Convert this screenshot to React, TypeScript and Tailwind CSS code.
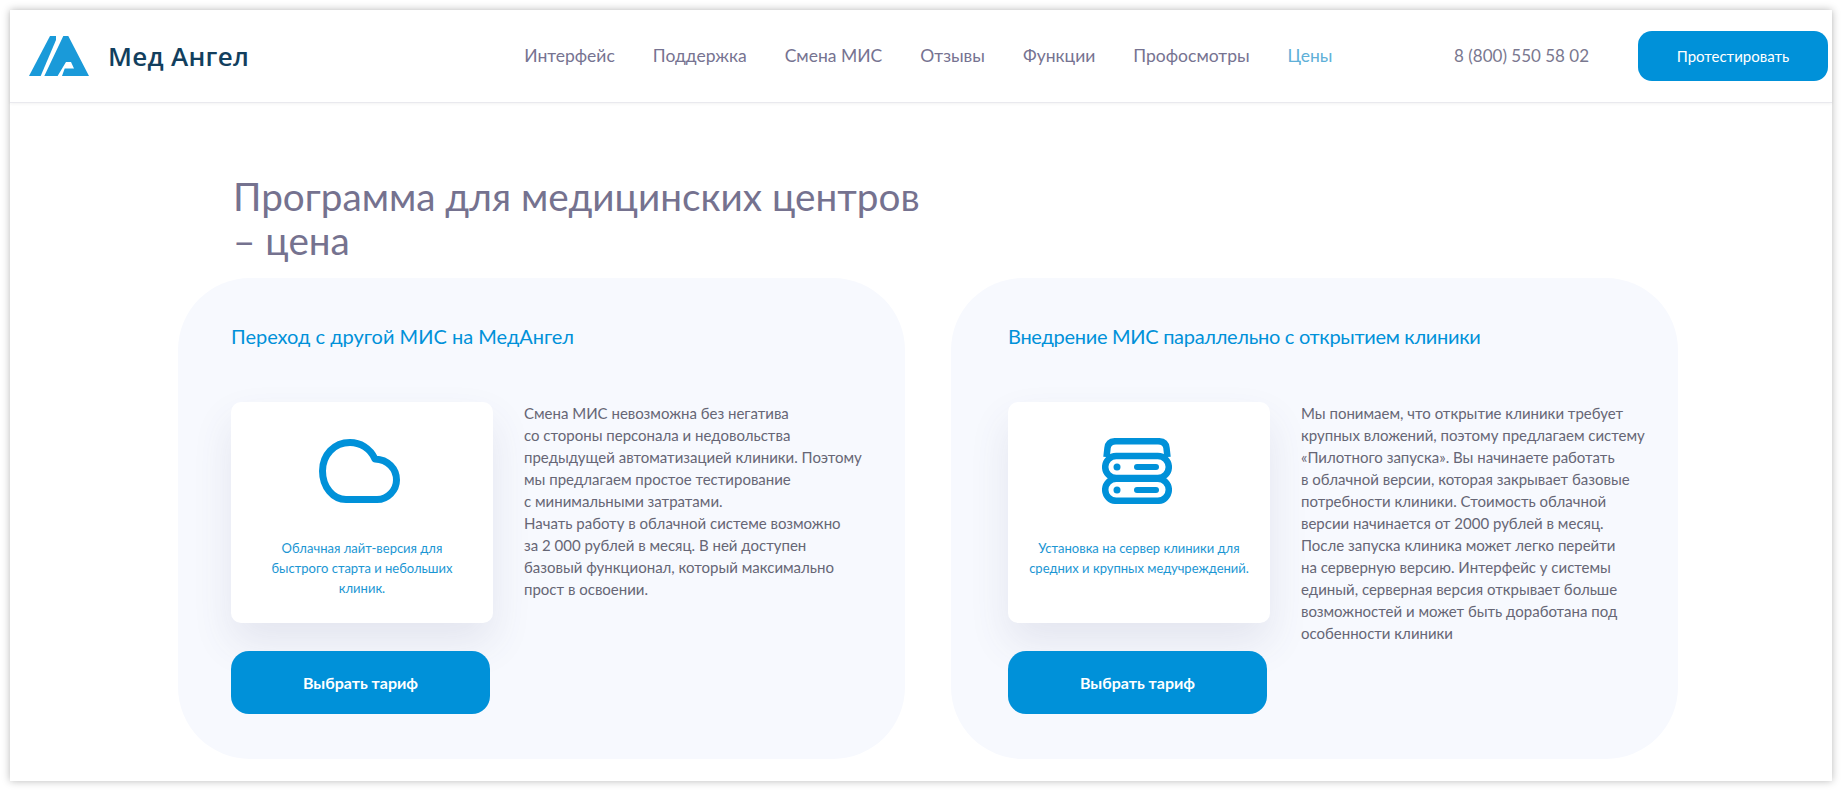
import React from 'react';

const navItems = ['Интерфейс', 'Поддержка', 'Смена МИС', 'Отзывы', 'Функции', 'Профосмотры'];

const Logo: React.FC = () => (
    <div className="flex items-center">
        <svg width="60" height="40" viewBox="0 0 60 40" fill="#1a9ad9">
            <path d="M0 40 L21 0 L27 0 L27 4 L11.7 40 Z" />
            <path fillRule="evenodd" d="M15.3 40 L34.3 0 L39.3 0 L60 40 Z M28.6 40 L33 40 L35.7 32.5 L45 32.5 L42 26 L37 26 Z" />
        </svg>
        <span className="ml-[19px] text-[26px] leading-none font-semibold text-[#123f5e] [font-family:'Open_Sans',sans-serif] tracking-[0.3px]">
            Мед Ангел
        </span>
    </div>
);

const CloudIcon: React.FC = () => (
    <svg width="81" height="64" viewBox="0 0 81 64" fill="none" stroke="#0091d9" strokeWidth="7" strokeLinejoin="round">
        <path d="M27 60.5 H58 C69 60.5 77.5 51 77.5 41 C77.5 30 69 20.5 56 20 C51 9 41 3.5 31 3.5 C15 3.5 3.5 16 3.5 32 C3.5 48 14 60.5 27 60.5 Z" />
    </svg>
);

const ServerIcon: React.FC = () => (
    <svg width="70" height="66" viewBox="0 0 70 66" fill="none">
        <g stroke="#0091d9" strokeWidth="6.5">
            <path d="M4.5 19 L5.5 10 C6 5 9 3.2 14 3.2 H56 C61 3.2 64 5 64.5 10 L65.5 19" />
            <rect x="3.2" y="18" width="63.6" height="22" rx="11" />
            <rect x="3.2" y="40.8" width="63.6" height="22" rx="11" />
        </g>
        <g fill="#0091d9">
            <circle cx="15" cy="29" r="3.5" />
            <circle cx="15" cy="52" r="3.5" />
            <rect x="32" y="26" width="25" height="6" rx="3" />
            <rect x="32" y="49" width="25" height="6" rx="3" />
        </g>
    </svg>
);

interface PriceCardProps {
    title: string;
    titleClass?: string;
    paddingClass: string;
    icon: React.ReactNode;
    caption: React.ReactNode;
    text: string[];
}

const PriceCard: React.FC<PriceCardProps> = ({ title, titleClass, paddingClass, icon, caption, text }) => (
    <div className={`w-[727px] h-[481px] rounded-[72px] bg-[#f7f9fe] pt-[46px] ${paddingClass}`}>
        <h2 className={`text-[20px] leading-[24px] text-[#0091d9] ${titleClass ?? ''}`}>{title}</h2>
        <div className="flex mt-[54px]">
            <div className="w-[262px] shrink-0">
                <div className="h-[221px] rounded-[10px] bg-white shadow-[0_20px_40px_rgba(70,70,120,0.11)] flex flex-col items-center pt-[35px]">
                    <div className="h-[68px] flex items-center mr-[5px]">{icon}</div>
                    <p className="text-[13px] leading-[20px] text-[#1b96d3] text-center mt-[33px]">{caption}</p>
                </div>
                <button className="mt-[28px] w-[259px] h-[63px] rounded-[18px] bg-[#0091d9] text-white text-[16px] font-bold">
                    Выбрать тариф
                </button>
            </div>
            <p className="ml-[31px] text-[15px] leading-[22px] text-[#666675] whitespace-nowrap">
                {text.map((line, i) => (
                    <React.Fragment key={i}>
                        {line}
                        <br />
                    </React.Fragment>
                ))}
            </p>
        </div>
    </div>
);

const App: React.FC = () => {
    return (
        <div className="w-[1842px] h-[791px] p-[10px] bg-white overflow-hidden [font-family:'Lato',sans-serif]">
            <div className="h-full bg-white shadow-[0_0_8px_rgba(0,0,0,0.28)]">
                <header className="h-[93px] flex items-center border-b border-[#e9e9ee] shadow-[0_1px_3px_rgba(0,0,0,0.05)] pl-[19px] pr-[4px]">
                    <Logo />
                    <nav className="flex gap-[38px] ml-[275px] text-[17.5px] text-[#767391]">
                        {navItems.map((item) => (
                            <a key={item}>{item}</a>
                        ))}
                        <a className="text-[#5fb0d8]">Цены</a>
                    </nav>
                    <span className="ml-auto text-[17px] text-[#7a788f]">8 (800) 550 58 02</span>
                    <button className="ml-[49px] w-[190px] h-[50px] rounded-[14px] bg-[#0091d9] text-white text-[15px]">
                        Протестировать
                    </button>
                </header>
                <main className="pl-[168px]">
                    <h1 className="pl-[55px] pt-[71px] h-[175px] text-[38.7px] leading-[44px] font-normal text-[#75728f] whitespace-nowrap">
                        Программа для медицинских центров
                        <br />– цена
                    </h1>
                    <div className="flex gap-[46px]">
                        <PriceCard
                            title="Переход с другой МИС на МедАнгел"
                            paddingClass="pl-[53px]"
                            icon={<CloudIcon />}
                            caption={<>Облачная лайт-версия для<br />быстрого старта и небольших<br />клиник.</>}
                            text={[
                                'Смена МИС невозможна без негатива',
                                'со стороны персонала и недовольства',
                                'предыдущей автоматизацией клиники. Поэтому',
                                'мы предлагаем простое тестирование',
                                'с минимальными затратами.',
                                'Начать работу в облачной системе возможно',
                                'за 2 000 рублей в месяц. В ней доступен',
                                'базовый функционал, который максимально',
                                'прост в освоении.',
                            ]}
                        />
                        <PriceCard
                            title="Внедрение МИС параллельно с открытием клиники"
                            titleClass="tracking-[-0.3px]"
                            paddingClass="pl-[57px]"
                            icon={<ServerIcon />}
                            caption={<>Установка на сервер клиники для<br />средних и крупных медучреждений.</>}
                            text={[
                                'Мы понимаем, что открытие клиники требует',
                                'крупных вложений, поэтому предлагаем систему',
                                '«Пилотного запуска». Вы начинаете работать',
                                'в облачной версии, которая закрывает базовые',
                                'потребности клиники. Стоимость облачной',
                                'версии начинается от 2000 рублей в месяц.',
                                'После запуска клиника может легко перейти',
                                'на серверную версию. Интерфейс у системы',
                                'единый, серверная версия открывает больше',
                                'возможностей и может быть доработана под',
                                'особенности клиники',
                            ]}
                        />
                    </div>
                </main>
            </div>
        </div>
    );
};

export default App;
